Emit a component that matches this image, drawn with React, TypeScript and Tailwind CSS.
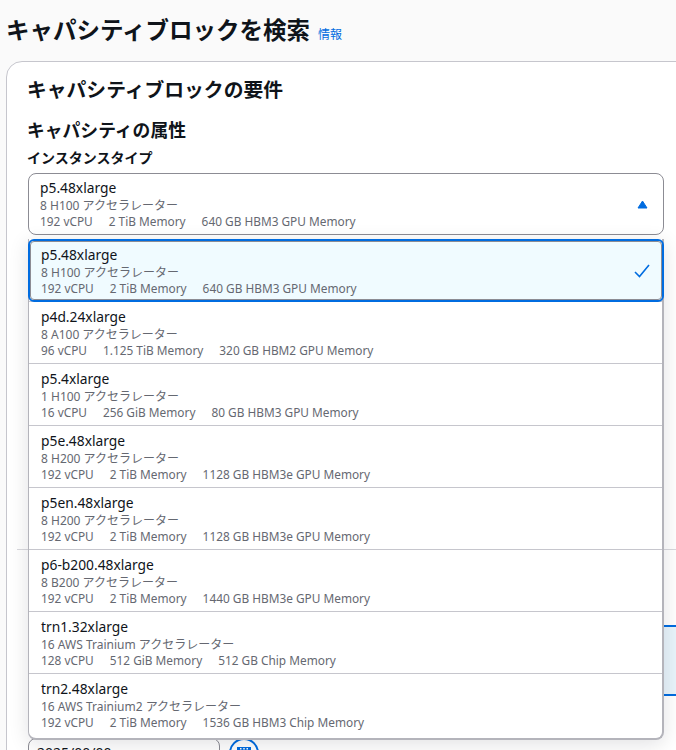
const options = [
  { name: "p5.48xlarge", accel: "8 H100 アクセラレーター", specs: ["192 vCPU", "2 TiB Memory", "640 GB HBM3 GPU Memory"] },
  { name: "p4d.24xlarge", accel: "8 A100 アクセラレーター", specs: ["96 vCPU", "1.125 TiB Memory", "320 GB HBM2 GPU Memory"] },
  { name: "p5.4xlarge", accel: "1 H100 アクセラレーター", specs: ["16 vCPU", "256 GiB Memory", "80 GB HBM3 GPU Memory"] },
  { name: "p5e.48xlarge", accel: "8 H200 アクセラレーター", specs: ["192 vCPU", "2 TiB Memory", "1128 GB HBM3e GPU Memory"] },
  { name: "p5en.48xlarge", accel: "8 H200 アクセラレーター", specs: ["192 vCPU", "2 TiB Memory", "1128 GB HBM3e GPU Memory"] },
  { name: "p6-b200.48xlarge", accel: "8 B200 アクセラレーター", specs: ["192 vCPU", "2 TiB Memory", "1440 GB HBM3e GPU Memory"] },
  { name: "trn1.32xlarge", accel: "16 AWS Trainium アクセラレーター", specs: ["128 vCPU", "512 GiB Memory", "512 GB Chip Memory"] },
  { name: "trn2.48xlarge", accel: "16 AWS Trainium2 アクセラレーター", specs: ["192 vCPU", "2 TiB Memory", "1536 GB HBM3 Chip Memory"] },
];

function OptionText({ option }: { option: (typeof options)[number] }) {
  return (
    <>
      <div className="text-[13.8px] leading-[17px] text-[#0f141a]">{option.name}</div>
      <div className="pt-[2px] text-[12px] leading-[15px] text-[#656871]">{option.accel}</div>
      <div className="flex gap-4 text-[11.85px] leading-[17px] text-[#656871]">
        {option.specs.map((spec) => (
          <span key={spec}>{spec}</span>
        ))}
      </div>
    </>
  );
}

export default function App() {
  return (
    <div className="relative h-[750px] w-[676px] overflow-hidden bg-[#fafafa] font-['Noto_Sans','Noto_Sans_CJK_JP',sans-serif] text-[#0f141a]">
      <div className="flex h-[61px] items-start gap-2 pl-[6px] pt-[13px]">
        <h1 className="text-[23.5px] font-bold leading-[34px]">キャパシティブロックを検索</h1>
        <a className="mt-[13px] text-[12px] leading-[17px] text-[#006ce0]">情報</a>
      </div>

      <div className="ml-[6px] h-[760px] w-[720px] rounded-t-[16px] border border-[#c6c6cd] bg-white pl-[20px] pt-[14px]">
        <h2 className="text-[19.8px] font-bold leading-[27px]">キャパシティブロックの要件</h2>
        <h3 className="mt-[14px] text-[17.8px] font-bold leading-[26px]">キャパシティの属性</h3>
        <div className="mt-[6px] text-[14px] font-bold leading-[17px]">インスタンスタイプ</div>
        <div className="ml-px mt-[7px] flex h-[62px] w-[636px] items-center justify-between rounded-[8px] border border-[#8c8c94] bg-white pl-[11px] pr-[15px]">
          <div>
            <OptionText option={options[0]} />
          </div>
          <svg width="11" height="9" viewBox="0 0 11 9" className="text-[#006ce0]">
            <path d="M5.5 1 L10 8 H1 Z" fill="currentColor" stroke="currentColor" strokeLinejoin="round" />
          </svg>
        </div>

        <div className="ml-[-10px] mt-[314px] h-px w-[720px] bg-[#d8d8dd]" />

        <div className="ml-[637px] mt-[75px] h-[71px] w-[40px] border-y-2 border-[#006ce0] bg-[#e8f4fb]" />

        <div className="ml-px mt-[42px] flex items-start gap-[9px]">
          <div className="h-[32px] w-[192px] rounded-[8px] border border-[#8c8c94] pl-[8px] text-[14px] leading-[27px] text-[#0f141a]">
            2025/00/00
          </div>
          <div className="flex h-[30px] w-[30px] items-center justify-center rounded-full border-2 border-[#006ce0] text-[#006ce0]">
            <svg width="16" height="16" viewBox="0 0 16 16" fill="currentColor">
              <path d="M1 2h14v13H1zM3 6v7h10V6z" fillRule="evenodd" />
              <path d="M4 3h1.5v1.5H4zM7.25 3h1.5v1.5h-1.5zM10.5 3H12v1.5h-1.5z" fill="#ffffff" />
              <path d="M5 8h1.5v1.5H5zM9.5 8H11v1.5H9.5z" />
            </svg>
          </div>
        </div>
      </div>

      {/* open dropdown list sits over the form */}
      <div className="absolute left-[28px] top-[239px] w-[636px] rounded-b-[8px] border-b-2 border-l border-r-2 border-[#b4b4bb] bg-white shadow-[0_4px_20px_rgba(0,7,22,0.12)]">
        {options.map((option, index) =>
          index === 0 ? (
            <div
              key={option.name}
              className="relative z-10 -mb-px -ml-px -mr-[2px] flex h-[63px] items-center justify-between rounded-[6px] border-2 border-[#006ce0] bg-[#f0fbff] pl-[11px] pr-[12px] outline outline-1 -outline-offset-3 outline-[#8c8c94]"
            >
              <div className="pt-[2px]">
                <OptionText option={option} />
              </div>
              <svg width="16" height="16" viewBox="0 0 16 16" fill="none" stroke="#006ce0" strokeWidth="1.6">
                <path d="M1 9l4.5 4.5L15 2" />
              </svg>
            </div>
          ) : (
            <div
              key={option.name}
              className={`border-t border-[#c6c6cd] pl-[12px] pt-[6px] ${index === options.length - 1 ? "h-[65px]" : "h-[62px]"}`}
            >
              <OptionText option={option} />
            </div>
          ),
        )}
      </div>
    </div>
  );
}
